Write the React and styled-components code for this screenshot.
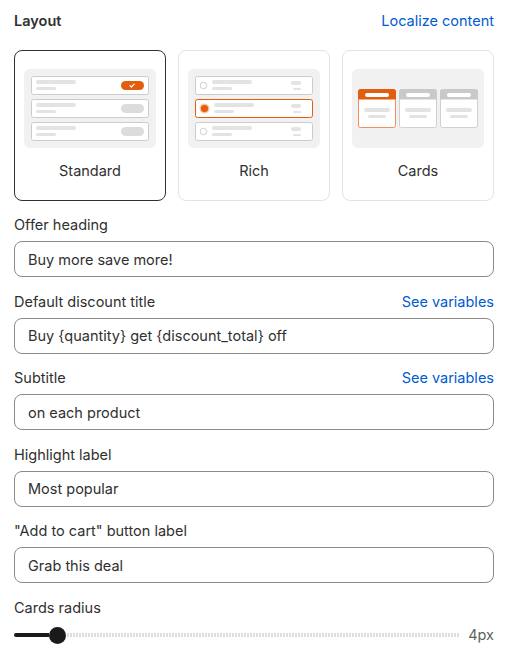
import React from "react";
import styled, { createGlobalStyle } from "styled-components";

const ORANGE = "#e35d0f";

const GlobalStyle = createGlobalStyle`
  body {
    margin: 0;
    background: #ffffff;
    font-family: Inter, "Noto Sans", "Liberation Sans", sans-serif;
    color: #303030;
  }
`;

const StandardArt = () => (
  <svg width="132" height="79" viewBox="0 0 132 79">
    {[7, 30, 53].map((y, i) => (
      <g key={y}>
        <rect x="7.5" y={y + 0.5} width="117" height="18" rx="2" fill="#fff" stroke="#cccccc" />
        <rect x="12" y={y + 4} width="40" height="4" rx="2" fill="#e3e3e3" />
        <rect x="12" y={y + 11} width="20" height="3" rx="1.5" fill="#e3e3e3" />
        <rect x="97" y={y + 5} width="23" height="9" rx="4.5" fill={i === 0 ? ORANGE : "#dcdcdc"} />
        {i === 0 && (
          <path
            d={`M106 ${y + 9.6} l1.4 1.4 l2.8 -2.8`}
            stroke="#fff"
            strokeWidth="1.2"
            strokeLinecap="round"
            strokeLinejoin="round"
            fill="none"
          />
        )}
      </g>
    ))}
  </svg>
);

const RichArt = () => (
  <svg width="132" height="79" viewBox="0 0 132 79">
    {[7, 30, 53].map((y, i) => {
      const on = i === 1;
      return (
        <g key={y}>
          <rect
            x="7.5"
            y={y + 0.5}
            width="117"
            height="18"
            rx="2"
            fill="#fff"
            stroke={on ? ORANGE : "#cccccc"}
          />
          {on ? (
            <>
              <circle cx="16.5" cy={y + 9.5} r="5" fill="#f6c3a4" />
              <circle cx="16.5" cy={y + 9.5} r="3.6" fill={ORANGE} />
            </>
          ) : (
            <circle cx="15.5" cy={y + 9.5} r="3.3" fill="#fff" stroke="#cfcfcf" />
          )}
          <rect x={on ? 26 : 24} y={y + 4} width="40" height="4" rx="2" fill="#e3e3e3" />
          <rect x={on ? 26 : 24} y={y + 11} width="20" height="3" rx="1.5" fill="#e3e3e3" />
          <rect x="103" y={y + 5} width="10" height="4" rx="2" fill="#e3e3e3" />
          <rect x="105" y={y + 12} width="8" height="2" rx="1" fill="#e3e3e3" />
        </g>
      );
    })}
  </svg>
);

const CardsArt = () => (
  <svg width="132" height="79" viewBox="0 0 132 79">
    {[6, 47, 88].map((x, i) => {
      const on = i === 0;
      return (
        <g key={x}>
          <rect
            x={x + 0.5}
            y="20.5"
            width="37"
            height="38"
            rx="2"
            fill="#fff"
            stroke={on ? "#f0915a" : "#d0d0d0"}
          />
          <path
            d={`M${x + 0.5} 30 V22.5 a2 2 0 0 1 2 -2 H${x + 35.5} a2 2 0 0 1 2 2 V30 Z`}
            fill={on ? ORANGE : "#c9c9c9"}
            stroke={on ? ORANGE : "#c9c9c9"}
          />
          <rect x={x + 7} y="24" width="24" height="4" rx="2" fill="#fff" />
          <rect x={x + 6} y="39" width="26" height="4" rx="2" fill="#e3e3e3" />
          <rect x={x + 10} y="46" width="18" height="3" rx="1.5" fill="#e3e3e3" />
        </g>
      );
    })}
  </svg>
);

const layouts = [
  { name: "Standard", Art: StandardArt, selected: true },
  { name: "Rich", Art: RichArt },
  { name: "Cards", Art: CardsArt },
];

const fields = [
  { label: "Offer heading", value: "Buy more save more!" },
  { label: "Default discount title", value: "Buy {quantity} get {discount_total} off", link: "See variables" },
  { label: "Subtitle", value: "on each product", link: "See variables" },
  { label: "Highlight label", value: "Most popular" },
  { label: "\"Add to cart\" button label", value: "Grab this deal" },
];

export default function App() {
  return (
    <>
      <GlobalStyle />
      <Panel>
        <Header>
          <Title>Layout</Title>
          <Link>Localize content</Link>
        </Header>
        <LayoutGrid>
          {layouts.map(({ name, Art, selected }) => (
            <LayoutCard key={name} $selected={selected}>
              <Thumb>
                <Art />
              </Thumb>
              <CardName>{name}</CardName>
            </LayoutCard>
          ))}
        </LayoutGrid>
        <Fields>
          {fields.map((f) => (
            <Field key={f.label}>
              <LabelRow>
                <Label>{f.label}</Label>
                {f.link && <Link>{f.link}</Link>}
              </LabelRow>
              <TextInput readOnly defaultValue={f.value} />
            </Field>
          ))}
          <Field>
            <LabelRow>
              <Label>Cards radius</Label>
            </LabelRow>
            <SliderRow>
              <SliderFill />
              <SliderKnob />
              <SliderRest />
              <SliderValue>4px</SliderValue>
            </SliderRow>
          </Field>
        </Fields>
      </Panel>
    </>
  );
}

const Panel = styled.div`
  width: 480px;
  padding: 11px 0 16px 14px;
  font-size: 14.5px;
  line-height: 20px;
`;
const Header = styled.div`
  display: flex;
  justify-content: space-between;
  align-items: center;
  height: 20px;
  margin-bottom: 19px;
`;
const Title = styled.h2`
  margin: 0;
  font-size: 14.5px;
  font-weight: 600;
  color: #303030;
`;
const Link = styled.span`
  color: #005bd3;
  font-size: 14.5px;
  cursor: pointer;
`;
const LayoutGrid = styled.div`
  display: grid;
  grid-template-columns: repeat(3, 1fr);
  gap: 12px;
`;
const LayoutCard = styled.div`
  display: flex;
  flex-direction: column;
  align-items: center;
  gap: 13px;
  padding: 18px 9px 19px;
  border: 1px solid ${(p) => (p.$selected ? "#303030" : "#e3e3e3")};
  border-radius: 8px;
  background: #fff;
`;
const Thumb = styled.div`
  width: 132px;
  height: 79px;
  background: #f1f1f1;
  border-radius: 6px;
  display: flex;
`;
const CardName = styled.span`
  color: #303030;
  font-size: 14.5px;
  line-height: 20px;
`;
const Fields = styled.div`
  display: flex;
  flex-direction: column;
  gap: 14.5px;
  margin-top: 14px;
`;
const Field = styled.div`
  display: flex;
  flex-direction: column;
  gap: 6px;
`;
const LabelRow = styled.div`
  display: flex;
  justify-content: space-between;
  align-items: center;
  height: 20px;
`;
const Label = styled.label`
  color: #303030;
  font-size: 14.5px;
`;
const TextInput = styled.input`
  box-sizing: border-box;
  width: 100%;
  height: 36px;
  padding: 0 13px;
  border: 1px solid #8a8a8a;
  border-radius: 8px;
  font-family: inherit;
  font-size: 14.5px;
  color: #303030;
  background: #fff;
  outline: none;
`;
const SliderRow = styled.div`
  display: flex;
  align-items: center;
  height: 23px;
`;
const SliderFill = styled.div`
  width: 35px;
  height: 4px;
  background: #1a1a1a;
  border-radius: 2px 0 0 2px;
`;
const SliderKnob = styled.div`
  width: 17px;
  height: 17px;
  border-radius: 50%;
  background: #1a1a1a;
  flex-shrink: 0;
`;
const SliderRest = styled.div`
  flex: 1;
  height: 4px;
  margin-left: 1px;
  background: repeating-linear-gradient(
    to right,
    #dedede 0 2px,
    transparent 2px 3px
  );
`;
const SliderValue = styled.span`
  margin-left: 9px;
  color: #616161;
  font-size: 14.5px;
`;
